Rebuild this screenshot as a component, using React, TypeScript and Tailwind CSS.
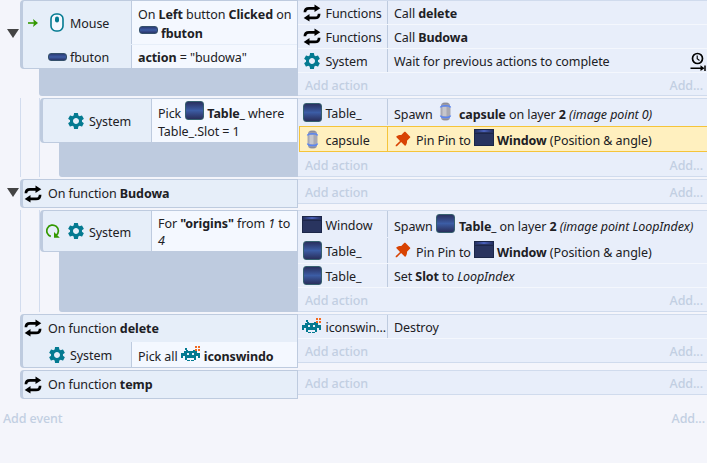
import type { ReactNode } from 'react';
import clsx from 'clsx';
import { AiFillPushpin } from 'react-icons/ai';
import { MdSettings } from 'react-icons/md';

type BoxProps = {
  className?: string;
  children?: ReactNode;
};

function Gear() {
  return <MdSettings className="size-5 shrink-0 text-[#047a91]" />;
}

function Swap() {
  return (
    <svg viewBox="0 0 18 18" className="size-[18px] shrink-0">
      <path
        d="M1.900 8.300Q1.900 4.300 6 4.300H13M16.100 9.700Q16.100 13.900 12 13.900H5"
        fill="none"
        stroke="#000"
        strokeWidth="2.700"
      />
      <path d="M11.500 0.500 17.300 4.200l-5.800 3.800zM6.500 10 0.700 13.900l5.800 3.700z" />
    </svg>
  );
}

function MouseIcon() {
  return (
    <svg viewBox="0 0 14 19" className="h-[19px] w-[14px] shrink-0">
      <rect
        x="1"
        y="1"
        width="12"
        height="17"
        rx="5"
        fill="#f4f8ff"
        stroke="#047a91"
        strokeWidth="1.6"
      />
      <rect x="5" y="3.500" width="4" height="6" rx="2" fill="#047a91" />
    </svg>
  );
}

function TriggerArrow() {
  return (
    <svg viewBox="0 0 10 8" className="h-2 w-[10px] shrink-0">
      <path d="M0 4h7" fill="none" stroke="#339800" strokeWidth="1.600" />
      <path d="M5 0 10 4 5 8l1-4z" fill="#339800" />
    </svg>
  );
}

function LoopIcon() {
  return (
    <svg viewBox="0 0 14 14" className="size-[14px] shrink-0">
      <path
        d="M4.800 12.400A5.800 5.800 0 1 1 10.200 11.400"
        fill="none"
        stroke="#339800"
        strokeWidth="1.700"
      />
      <path d="M8 8v5.800h5.800z" fill="#339800" />
    </svg>
  );
}

function WaitIcon() {
  return (
    <svg viewBox="0 0 16 19" className="h-[19px] w-4 shrink-0">
      <g fill="none" stroke="#000">
        <circle cx="7.500" cy="6.500" r="5" strokeWidth="1.700" />
        <path d="M7.200 3.500v3.300L9.500 8.500" strokeWidth="1.100" />
        <path d="M0.500 16.200H13M15 13.500V19" strokeWidth="1.500" />
      </g>
      <path d="M10.500 13.300 14.500 16.200l-4 2.800z" />
    </svg>
  );
}

function Button() {
  return (
    <span className="h-2 w-[19px] shrink-0 rounded-[3px] border border-[#34506b] bg-linear-to-b from-[#2c3c75] via-[#3d5ba3] to-[#29356a]" />
  );
}

function Slot() {
  return (
    <span className="size-[19px] shrink-0 rounded-[3px] border border-[#36606f] bg-linear-to-b from-[#29305f] via-[#3c5da5] to-[#292f5c]" />
  );
}

function WindowIcon() {
  return (
    <span className="flex h-[17px] w-5 shrink-0 flex-col border border-[#1c2748] bg-[#29345f]">
      <span className="h-[2px] bg-linear-to-r from-[#242f62] via-[#4b62bd] to-[#242f62]" />
      <span className="mt-px h-px bg-[#1d2649]" />
    </span>
  );
}

function Capsule() {
  return (
    <svg viewBox="0 0 19 19" className="size-[19px] shrink-0">
      <rect x="5" y="0.500" width="9" height="18" rx="3.500" fill="#9a9aa6" />
      <rect x="4.500" y="4" width="10" height="11" rx="2" fill="#a9a9b3" />
      <rect x="6.500" y="5" width="4" height="9" fill="#c6c6cc" />
      <path
        d="M4.500 5.500Q5 3.800 9.500 3.800t5 1.700M4.500 13.500q.5 2 5 2t5-2"
        fill="none"
        stroke="#5b86f2"
        strokeWidth="1.500"
      />
      <path d="M7 1.500h5M7 17.500h5" stroke="#8d8d98" />
    </svg>
  );
}

function Invader() {
  return (
    <svg viewBox="0 0 20 16" className="h-4 w-5 shrink-0" shapeRendering="crispEdges">
      <path
        fill="#047a91"
        d="M4 2h2v2H4zM5 4h2v1H5zM12 4h2v1h-2zM3 5h13v2H3zM2 7h15v3H2zM0 7h2v5H0zM17 7h2v5h-2zM4 10h11v2H4zM4 12h2v2H4zM13 12h2v2h-2zM6 14h3v1H6zM10 14h3v1h-3z"
      />
      <path fill="#e6eef9" d="M6 7h2v2H6zM11 7h2v2h-2z" />
      <path fill="#f26a21" d="M14 0h2v2h-2zM17 0h2v2h-2zM14 3h2v2h-2zM17 3h2v2h-2z" />
    </svg>
  );
}

function Pin() {
  return <AiFillPushpin className="-ml-px mr-[3px] size-5 shrink-0 -translate-y-[2px] text-[#d84303]" />;
}

function Lift({ children }: BoxProps) {
  return <span className="mr-[3px] flex w-5 shrink-0 -translate-y-[3px] justify-center">{children}</span>;
}

function Line({ className, children }: BoxProps) {
  return <div className={clsx('flex items-center whitespace-pre', className)}>{children}</div>;
}

function Fold({ className }: BoxProps) {
  return (
    <svg viewBox="0 0 12 9" className={clsx('absolute left-[7px] h-[9px] w-3', className)}>
      <path d="M0 0h12L6 9z" fill="#444" />
    </svg>
  );
}

// One event: conditions on the left, actions on the right
function Event({ className, children }: BoxProps) {
  return <div className={clsx('relative flex items-start', className)}>{children}</div>;
}

function Guides() {
  return <div className="ml-5 w-5 shrink-0 self-stretch border-x border-[#d2dcee]" />;
}

function Conditions({ className, children }: BoxProps) {
  return (
    <div
      className={clsx(
        'flex flex-col rounded-l-[4px] border-y border-r border-l-[3px] border-[#becbdf] bg-[#e6eef9]',
        className,
      )}
    >
      {children}
    </div>
  );
}

type ConditionProps = BoxProps & {
  icon: ReactNode;
  name: string;
  nested?: boolean;
};

function Condition({ className, icon, name, nested, children }: ConditionProps) {
  return (
    <div className={clsx('flex', className)}>
      <div className="flex w-[108px] shrink-0 items-center">
        <div className={clsx('flex shrink-0 items-center justify-end', nested ? 'w-[43px]' : 'w-11')}>
          {icon}
        </div>
        <span className="ml-[3px] translate-y-px">{name}</span>
      </div>
      <div className="flex flex-1 flex-col justify-center border-l border-[#becbdf] bg-[#f4f8ff] pl-[6px]">
        {children}
      </div>
    </div>
  );
}

function Actions({ children }: BoxProps) {
  return (
    <div className="ml-auto flex w-[409px] shrink-0 flex-col border-y border-[#d0dbed] bg-[#e8eefa]">
      {children}
    </div>
  );
}

type ActionProps = BoxProps & {
  icon: ReactNode;
  name: string;
  selected?: boolean;
};

function Action({ className, icon, name, selected, children }: ActionProps) {
  return (
    <div className={clsx('flex border-b', className ?? 'h-6 border-[#f4f7fd]')}>
      <div
        className={clsx(
          'flex shrink-0 items-center border-r',
          selected ? 'w-[88px] border-[#f5c43a] pl-[3px]' : 'w-[90px] border-[#becbdf] pl-[5px]',
        )}
      >
        <div className="-ml-px flex w-5 shrink-0 items-center justify-center">{icon}</div>
        <span className="ml-[3.500px] translate-y-px">{name}</span>
      </div>
      <div className="flex flex-1 items-center pt-px pl-[6px]">{children}</div>
    </div>
  );
}

function AddAction({ className }: BoxProps) {
  return (
    <div
      className={clsx(
        'flex items-center justify-between pt-[2px] pr-1 pl-[7px] font-medium text-[#c2cfe2]',
        className ?? 'h-[23px]',
      )}
    >
      <span>Add action</span>
      <span>Add...</span>
    </div>
  );
}

export default function App() {
  return (
    <div className="h-[463px] w-[707px] overflow-hidden bg-[#f4f5fb] font-['Noto_Sans',sans-serif] text-[12.5px] leading-[17px] tracking-[-0.08px] text-[#202024]">
      <Event className="h-[96px]">
        <Fold className="top-[29px]" />
        <div className="flex w-[298px] flex-col">
          <Conditions className="ml-5 h-[69px]">
            <Condition
              className="h-[43px]"
              name="Mouse"
              icon={
                <>
                  <TriggerArrow />
                  <span className="mr-[3px] ml-3">
                    <MouseIcon />
                  </span>
                </>
              }
            >
              <Line className="pt-[2px]">On <b>Left</b> button <b>Clicked</b> on</Line>
              <Line className="mt-[2px]"><Lift><Button /></Lift><b>fbuton</b></Line>
            </Condition>
            <Condition className="h-6 border-t border-[#e6eef9]" name="fbuton" icon={<Button />}>
              <Line className="pt-px"><b>action</b> = "budowa"</Line>
            </Condition>
          </Conditions>
          <div className="ml-[39px] h-[27px] rounded-bl-[3px] bg-[#becbdf]" />
        </div>
        <Actions>
          <Action name="Functions" icon={<Swap />}><Line>Call <b>delete</b></Line></Action>
          <Action name="Functions" icon={<Swap />}><Line>Call <b>Budowa</b></Line></Action>
          <Action name="System" icon={<Gear />}>
            <Line>Wait for previous actions to complete</Line>
            <span className="mr-px ml-auto"><WaitIcon /></span>
          </Action>
          <AddAction className="h-[22px]" />
        </Actions>
      </Event>

      <Event className="mt-[2px] h-[79px]">
        <Guides />
        <div className="flex w-[258px] flex-col">
          <Conditions className="h-[45px]">
            <Condition className="h-[43px]" name="System" icon={<Gear />} nested>
              <Line className="pt-[3px]">Pick <Lift><Slot /></Lift><b>Table_</b> where</Line>
              <Line>Table_.Slot = 1</Line>
            </Condition>
          </Conditions>
          <div className="ml-[19px] h-[34px] rounded-bl-[3px] bg-[#becbdf]" />
        </div>
        <Actions>
          <Action className="h-[27px] border-transparent" name="Table_" icon={<Slot />}>
            <Line className="pt-[3px]">
              Spawn <Lift><Capsule /></Lift>
              <span><b>capsule</b> on layer <b>2</b> <i>(image point 0)</i></span>
            </Line>
          </Action>
          <Action
            className="-mr-px ml-px h-[26px] border border-[#f5c43a] bg-[#fff0bf]"
            name="capsule"
            icon={<Capsule />}
            selected
          >
            <Line className="pt-[2px]"><Pin />Pin Pin to <Lift><WindowIcon /></Lift><b>Window</b> (Position & angle)</Line>
          </Action>
          <AddAction className="h-6" />
        </Actions>
      </Event>

      <Event className="mt-[2px] h-[29px]">
        <Fold className="top-[9px]" />
        <div className="w-[298px]">
          <Conditions className="ml-5 h-[29px]">
            <Line className="h-full gap-[6px] pl-px"><Swap /><span>On function <b>Budowa</b></span></Line>
          </Conditions>
        </div>
        <Actions><AddAction /></Actions>
      </Event>

      <Event className="mt-[2px] h-[102px]">
        <Guides />
        <div className="flex w-[258px] flex-col">
          <Conditions className="h-[42px]">
            <Condition
              className="h-10"
              name="System"
              nested
              icon={
                <>
                  <LoopIcon />
                  <span className="ml-[6px]">
                    <Gear />
                  </span>
                </>
              }
            >
              <Line className="pt-px">For <b>"origins"</b> from <i>1</i> to</Line>
              <Line><i>4</i></Line>
            </Condition>
          </Conditions>
          <div className="ml-[19px] h-[60px] rounded-bl-[3px] bg-[#becbdf]" />
        </div>
        <Actions>
          <Action className="h-[27px] border-transparent" name="Window" icon={<WindowIcon />}>
            <Line className="pt-[3px]">
              Spawn <Lift><Slot /></Lift>
              <span><b>Table_</b> on layer <b>2</b> <i>(image point LoopIndex)</i></span>
            </Line>
          </Action>
          <Action className="h-[26px] border-[#f4f7fd]" name="Table_" icon={<Slot />}>
            <Line className="pt-[2px]"><Pin />Pin Pin to <Lift><WindowIcon /></Lift><b>Window</b> (Position & angle)</Line>
          </Action>
          <Action name="Table_" icon={<Slot />}><Line>Set <b>Slot</b> to <i>LoopIndex</i></Line></Action>
          <AddAction />
        </Actions>
      </Event>

      <Event className="mt-[2px] h-[54px]">
        <div className="w-[298px]">
          <Conditions className="ml-5 h-[54px]">
            <Line className="h-[27px] gap-[6px] pb-px pl-px"><Swap /><span>On function <b>delete</b></span></Line>
            <Condition className="h-[25px]" name="System" icon={<Gear />}>
              <Line className="pt-1">Pick all <Lift><Invader /></Lift><b>iconswindo</b></Line>
            </Condition>
          </Conditions>
        </div>
        <Actions>
          <Action name="iconswin..." icon={<span className="-translate-y-px"><Invader /></span>}>
            <Line>Destroy</Line>
          </Action>
          <AddAction />
        </Actions>
      </Event>

      <Event className="mt-[2px] h-[29px]">
        <div className="w-[298px]">
          <Conditions className="ml-5 h-[29px]">
            <Line className="h-full gap-[6px] pl-px"><Swap /><span>On function <b>temp</b></span></Line>
          </Conditions>
        </div>
        <Actions><AddAction /></Actions>
      </Event>

      <div className="mt-[11px] flex justify-between pr-[2px] pl-[3px] font-medium text-[#c2cfe2]">
        <span>Add event</span>
        <span>Add...</span>
      </div>
    </div>
  );
}
